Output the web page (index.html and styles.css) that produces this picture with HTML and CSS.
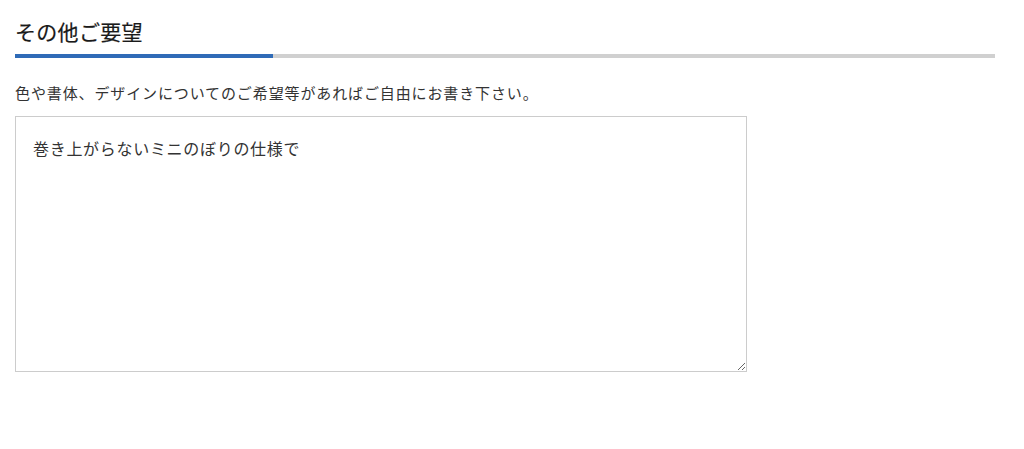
FILE: index.html
```html
<!DOCTYPE html>
<html lang="ja">
<head>
<meta charset="utf-8">
<title>その他ご要望</title>
<link rel="stylesheet" href="styles.css">
</head>
<body>
<section class="request">
  <h2 class="request-title">その他ご要望</h2>
  <div class="request-rule"><span class="request-rule-accent"></span></div>
  <p class="request-note">色や書体、デザインについてのご希望等があればご自由にお書き下さい。</p>
  <textarea class="request-input">巻き上がらないミニのぼりの仕様で</textarea>
</section>
</body>
</html>
```
FILE: styles.css
```css
html, body {
  margin: 0;
  padding: 0;
  background: #fff;
}

body {
  font-family: "Noto Sans CJK JP", "Noto Sans", sans-serif;
  color: #333;
}

.request {
  display: flex;
  flex-direction: column;
  align-items: flex-start;
  padding: 16px 29px 0 15px;
}

.request-title {
  margin: 0;
  font-size: 21px;
  font-weight: 400;
  line-height: 30px;
  letter-spacing: 0.3px;
  color: #1a1a1a;
  -webkit-text-stroke: 0.2px #1a1a1a;
}

.request-rule {
  align-self: stretch;
  display: flex;
  height: 4px;
  margin-top: 8px;
  background: #d0d0d0;
}

.request-rule-accent {
  width: 258px;
  background: #2f6bb7;
}

.request-note {
  margin: 24px 0 0;
  font-size: 15px;
  line-height: 22px;
  letter-spacing: 0.88px;
  color: #333;
}

.request-input {
  box-sizing: border-box;
  width: 732px;
  height: 256px;
  margin-top: 12px;
  padding: 19px 17px;
  border: 1px solid #ccc;
  border-radius: 0;
  font-family: inherit;
  font-size: 16px;
  line-height: 24px;
  letter-spacing: 0.7px;
  color: #333;
  resize: both;
  outline: none;
}
```
